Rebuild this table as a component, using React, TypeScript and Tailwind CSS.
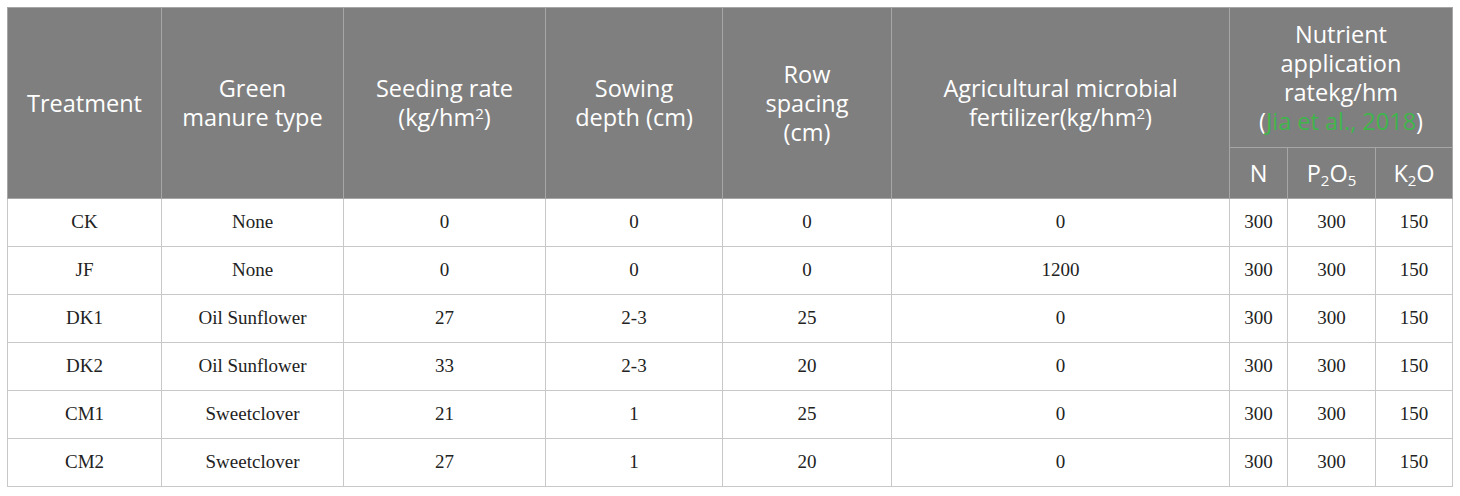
import React from "react";

const rows = [
  ["CK", "None", "0", "0", "0", "0", "300", "300", "150"],
  ["JF", "None", "0", "0", "0", "1200", "300", "300", "150"],
  ["DK1", "Oil Sunflower", "27", "2-3", "25", "0", "300", "300", "150"],
  ["DK2", "Oil Sunflower", "33", "2-3", "20", "0", "300", "300", "150"],
  ["CM1", "Sweetclover", "21", "1", "25", "0", "300", "300", "150"],
  ["CM2", "Sweetclover", "27", "1", "20", "0", "300", "300", "150"],
];

const widths = [154, 182, 202, 177, 169, 338, 58, 88, 77];

export default function App() {
  const th =
    "border border-[#a6a6a6] bg-[#7f7f80] text-white font-normal text-center align-middle px-1 text-[23.5px] leading-[29px]";
  const sup = "text-[15px] leading-none relative -top-[7px] align-baseline";
  const sub = "text-[15px] leading-none relative top-[4px] align-baseline";
  return (
    <div className="w-[1460px] h-[496px] bg-white pt-[7px] pl-[7px]">
      <table
        className="table-fixed border-collapse border border-[#c8c8c8]"
        style={{ width: 1445, fontFamily: '"Open Sans", "Noto Sans", sans-serif' }}
      >
        <colgroup>
          {widths.map((w, i) => (
            <col key={i} style={{ width: w }} />
          ))}
        </colgroup>
        <thead>
          <tr className="h-[140px]">
            <th rowSpan={2} className={th}>Treatment</th>
            <th rowSpan={2} className={th}>Green<br />manure type</th>
            <th rowSpan={2} className={th}>
              Seeding rate<br />(kg/hm<sup className={sup}>2</sup>)
            </th>
            <th rowSpan={2} className={th}>Sowing<br />depth (cm)</th>
            <th rowSpan={2} className={th}>Row<br />spacing<br />(cm)</th>
            <th rowSpan={2} className={th}>
              Agricultural microbial<br />fertilizer(kg/hm<sup className={sup}>2</sup>)
            </th>
            <th colSpan={3} className={th}>
              Nutrient<br />application<br />ratekg/hm<br />(
              <span className="text-[#3fb54b]">Jia et al., 2018</span>)
            </th>
          </tr>
          <tr className="h-[51px]">
            <th className={th + " px-0"}>N</th>
            <th className={th + " px-0"}>
              P<sub className={sub}>2</sub>O<sub className={sub}>5</sub>
            </th>
            <th className={th + " px-0"}>
              K<sub className={sub}>2</sub>O
            </th>
          </tr>
        </thead>
        <tbody>
          {rows.map((r, i) => (
            <tr key={i} className="h-[48px]">
              {r.map((c, j) => (
                <td
                  key={j}
                  className="border border-[#c8c8c8] text-center align-middle text-[19px] text-[#222] px-0"
                  style={{ fontFamily: '"Liberation Serif", "Times New Roman", serif' }}
                >
                  {c}
                </td>
              ))}
            </tr>
          ))}
        </tbody>
      </table>
    </div>
  );
}
